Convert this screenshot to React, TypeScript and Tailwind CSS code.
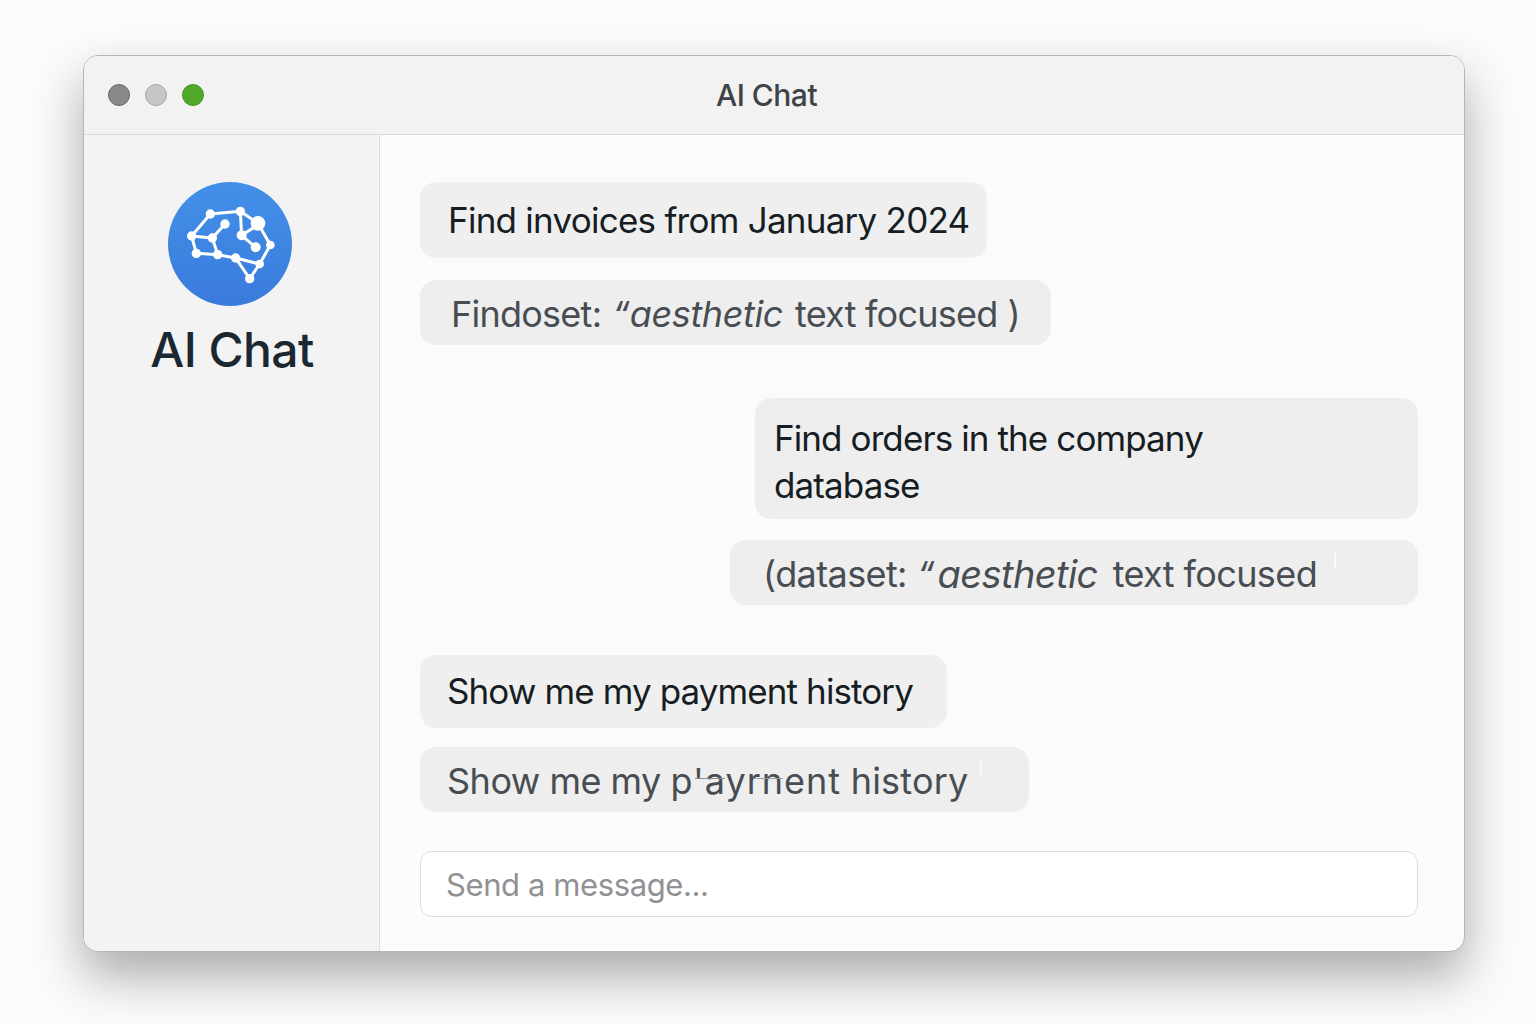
const font = { fontFamily: "Inter, 'Liberation Sans', sans-serif" };

const nodes: [number, number, number][] = [
  [182, 132, 14],
  [272, 124, 14],
  [325, 160, 22],
  [362, 225, 13],
  [330, 282, 13],
  [300, 326, 14],
  [258, 264, 14],
  [204, 254, 14],
  [140, 250, 14],
  [126, 198, 14],
  [188, 204, 14],
  [226, 162, 14],
  [276, 196, 15],
  [318, 232, 15],
];

const BrainLogo = () => (
  <svg viewBox="55 36 372 372" className="h-[124px] w-[124px]">
    <defs>
      <linearGradient id="logoBlue" x1="0" y1="0" x2="0" y2="1">
        <stop offset="0" stopColor="#4390e8" />
        <stop offset="1" stopColor="#3a7bdc" />
      </linearGradient>
    </defs>
    <circle cx="241" cy="222" r="186" fill="url(#logoBlue)" />
    <path
      d="M126 198L182 132L272 124L325 160L362 225L330 282L300 326L258 264L330 282M258 264L204 254L140 250L126 198L188 204L204 254M188 204L226 162M272 124L276 196L318 232M276 196L335 158"
      fill="none"
      stroke="#fff"
      strokeWidth="9"
      strokeLinejoin="round"
    />
    {nodes.map(([cx, cy, r]) => (
      <circle key={`${cx}-${cy}`} cx={cx} cy={cy} r={r} fill="#fff" />
    ))}
  </svg>
);

export default function App() {
  return (
    <div className="h-[1024px] w-[1536px] overflow-hidden bg-[#fbfbfb] pl-[83px] pt-[55px]" style={font}>
      <div className="flex h-[897px] w-[1382px] flex-col overflow-hidden rounded-[15px] border border-[#b5b5b5] bg-[#fbfbfb] shadow-[0_24px_50px_rgba(0,0,0,0.32)]">
        <header className="relative flex h-[79px] shrink-0 items-center gap-[15px] border-b border-[#d9d9d9] bg-[#f2f2f2] pl-[24px]">
          <span className="h-[22px] w-[22px] rounded-full border border-[#666666] bg-[#8a8a8a]" />
          <span className="h-[22px] w-[22px] rounded-full border border-[#a5a5a5] bg-[#c6c6c6]" />
          <span className="h-[22px] w-[22px] rounded-full border border-[#3b9a1c] bg-[#4fa82a]" />
          <h1 className="absolute inset-x-0 pr-[15px] text-center text-[30px] font-medium tracking-[-0.5px] text-[#3d4347]">AI Chat</h1>
        </header>
        <div className="flex min-h-0 flex-1">
          <aside className="flex w-[296px] shrink-0 flex-col items-center border-r border-[#dedede] bg-[#f3f3f3] pt-[47px]">
            <div className="mr-[3px]"><BrainLogo /></div>
            <div className="ml-[1px] mt-[14px] text-[48px] font-medium leading-[60px] tracking-[-0.6px] text-[#1b2731]">AI Chat</div>
          </aside>
          <main className="flex flex-1 flex-col pl-[40px] pr-[46px] pt-[47px]">
            <div className="flex h-[76px] w-[567px] items-center whitespace-nowrap rounded-[16px] bg-[#efefef] pl-[28px] text-[35px] tracking-[-0.75px] text-[#161d23]">
              Find invoices from January 2024
            </div>
            <div className="mt-[22px] flex h-[65px] w-[631px] items-center whitespace-nowrap rounded-[16px] bg-[#eeeeee] pl-[31px] pt-[3px] text-[36px] tracking-[-0.75px] text-[#474d52]">
              <span>Findoset:</span>
              <i className="ml-[11px] mr-[1px]">“</i>
              <i className="tracking-[-0.4px]">aesthetic</i>
              <span className="ml-[12px]">text focused</span>
              <span className="ml-[10px]">)</span>
            </div>
            <div className="mt-[53px] h-[121px] w-[663px] self-end rounded-[16px] bg-[#eeeeee] pl-[19px] pt-[17px] text-[35px] leading-[47px] tracking-[-0.9px] text-[#161d23]">
              Find orders in the company<br />database
            </div>
            <div className="relative mt-[21px] flex h-[65px] w-[688px] items-center self-end whitespace-nowrap rounded-[16px] bg-[#eeeeee] pl-[33px] pt-[3px] text-[36px] tracking-[-0.6px] text-[#474d52]">
              <span>(dataset:</span>
              <i className="ml-[10px] mr-[4px]">“</i>
              <i className="text-[38px]">aesthetic</i>
              <span className="ml-[15px]">text focused</span>
              <span className="absolute left-[604px] top-[13px] h-[16px] w-[2px] bg-[#fafafa]" />
            </div>
            <div className="mt-[50px] flex h-[73px] w-[527px] items-center whitespace-nowrap rounded-[16px] bg-[#efefef] pl-[27px] text-[35px] tracking-[-0.9px] text-[#161d23]">
              Show me my payment history
            </div>
            <div className="relative mt-[19px] flex h-[65px] w-[609px] items-center whitespace-nowrap rounded-[16px] bg-[#eeeeee] pl-[27px] pt-[2px] text-[36px] tracking-[-0.5px] text-[#474d52]">
              <span>
                Show me my <span className="tracking-[1px]">p'ayrnent</span> <span className="tracking-[0.2px]">history</span>
              </span>
              <span className="absolute left-[560px] top-[14px] h-[16px] w-[2px] bg-[#fafafa]" />
              <span className="absolute left-[275px] top-[31px] h-[1px] w-[30px] bg-[#8a8f93]" />
              <span className="absolute left-[333px] top-[31px] h-[1px] w-[30px] bg-[#9a9ea2]" />
            </div>
            <div className="mt-[39px] flex h-[66px] items-center rounded-[12px] border border-[#dcdcdc] bg-white pl-[25px] pt-[3px] text-[31px] tracking-[-0.4px] text-[#8f9194]">
              Send a message...
            </div>
          </main>
        </div>
      </div>
    </div>
  );
}
